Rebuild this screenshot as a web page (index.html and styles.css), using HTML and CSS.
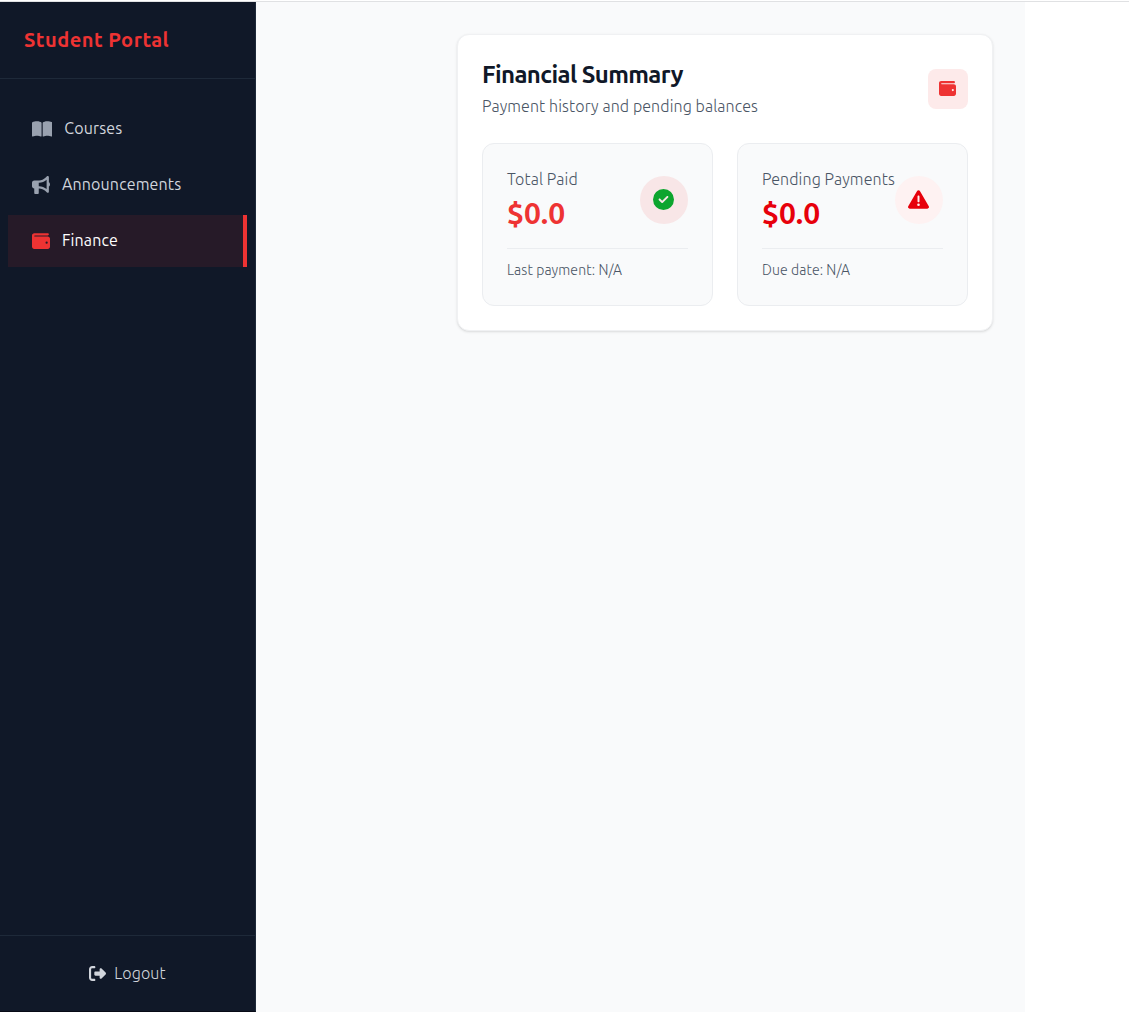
FILE: index.html
```html
<!DOCTYPE html>
<html lang="en">
<head>
<meta charset="utf-8">
<title>Student Portal</title>
<link rel="stylesheet" href="styles.css">
</head>
<body>
<div class="app">
  <aside class="sidebar">
    <div class="brand"><span class="brand-name">Student Portal</span></div>
    <nav class="nav">
      <a class="nav-item"><svg class="icon book" viewBox="0 0 576 512"><path d="M249.6 471.5c10.8 3.8 22.4-4.1 22.4-15.5V78.6c0-4.2-1.6-8.4-5-11C247.4 52 202.4 32 144 32C93.5 32 46.3 45.3 18.1 56.1C6.8 60.5 0 71.7 0 83.8V454.1c0 11.9 12.8 20.2 24.1 16.5C55.6 460.1 105.5 448 144 448c33.9 0 79 14 105.6 23.5zm76.8 0C353 462 398.1 448 432 448c38.5 0 88.4 12.1 119.9 22.6c11.3 3.8 24.1-4.6 24.1-16.5V83.8c0-12.1-6.8-23.3-18.1-27.6C529.7 45.3 482.5 32 432 32c-58.4 0-103.4 20-123 35.6c-3.3 2.6-5 6.8-5 11V456c0 11.4 11.7 19.3 22.4 15.5z"/></svg><span>Courses</span></a>
      <a class="nav-item"><svg class="icon" viewBox="0 0 512 512"><path d="M480 32c0-12.9-7.8-24.6-19.8-29.6s-25.7-2.2-34.9 6.9L381.7 53c-48 48-113.1 75-181 75H192 160 64c-35.3 0-64 28.7-64 64v96c0 35.3 28.7 64 64 64l0 128c0 17.7 14.3 32 32 32h64c17.7 0 32-14.3 32-32V352l8.7 0c67.9 0 133 27 181 75l43.6 43.6c9.2 9.2 22.9 11.9 34.9 6.9s19.8-16.6 19.8-29.6V300.4c18.6-8.8 32-32.5 32-60.4s-13.4-51.6-32-60.4V32zm-64 76.7V240 371.3C357.2 317.8 280.5 288 200.7 288H192V192h8.7c79.8 0 156.5-29.8 215.3-83.3z"/></svg><span>Announcements</span></a>
      <a class="nav-item active"><svg class="icon" viewBox="0 0 512 512"><path d="M64 32C28.7 32 0 60.7 0 96V416c0 35.3 28.7 64 64 64H448c35.3 0 64-28.7 64-64V192c0-35.3-28.7-64-64-64H80c-8.8 0-16-7.2-16-16s7.2-16 16-16H448c17.7 0 32-14.3 32-32s-14.3-32-32-32H64zM416 272a32 32 0 1 1 0 64 32 32 0 1 1 0-64z"/></svg><span>Finance</span></a>
    </nav>
    <div class="logout"><svg class="icon" viewBox="0 0 512 512"><path d="M377.9 105.9L500.7 228.7c7.2 7.2 11.3 17.1 11.3 27.3s-4.1 20.1-11.3 27.3L377.9 406.1c-6.4 6.4-15 9.9-24 9.9c-18.7 0-33.9-15.2-33.9-33.9l0-62.1-128 0c-17.7 0-32-14.3-32-32l0-64c0-17.7 14.3-32 32-32l128 0 0-62.1c0-18.7 15.2-33.9 33.9-33.9c9 0 17.6 3.6 24 9.9zM160 96L96 96c-17.7 0-32 14.3-32 32l0 256c0 17.7 14.3 32 32 32l64 0c17.7 0 32 14.3 32 32s-14.3 32-32 32l-64 0c-53 0-96-43-96-96L0 128C0 75 43 32 96 32l64 0c17.7 0 32 14.3 32 32s-14.3 32-32 32z"/></svg><span>Logout</span></div>
  </aside>
  <main class="content">
    <section class="card">
      <header class="card-head">
        <div class="heading">
          <h1 class="title">Financial Summary</h1>
          <p class="subtitle">Payment history and pending balances</p>
        </div>
        <div class="badge"><svg class="icon" viewBox="0 0 512 512"><path d="M64 32C28.7 32 0 60.7 0 96V416c0 35.3 28.7 64 64 64H448c35.3 0 64-28.7 64-64V192c0-35.3-28.7-64-64-64H80c-8.8 0-16-7.2-16-16s7.2-16 16-16H448c17.7 0 32-14.3 32-32s-14.3-32-32-32H64zM416 272a32 32 0 1 1 0 64 32 32 0 1 1 0-64z"/></svg></div>
      </header>
      <div class="stats">
        <article class="stat">
          <div class="stat-top">
            <div class="stat-text">
              <p class="label">Total Paid</p>
              <p class="amount">$0.0</p>
            </div>
            <div class="round paid"><svg class="icon" viewBox="0 0 512 512"><path d="M256 512A256 256 0 1 0 256 0a256 256 0 1 0 0 512zM369 209L241 337c-9.4 9.4-24.6 9.4-33.9 0l-64-64c-9.4-9.4-9.4-24.6 0-33.9s24.6-9.4 33.9 0l47 47L335 175c9.4-9.4 24.6-9.4 33.9 0s9.4 24.6 0 33.9z"/></svg></div>
          </div>
          <p class="note">Last payment: N/A</p>
        </article>
        <article class="stat">
          <div class="stat-top">
            <div class="stat-text">
              <p class="label">Pending Payments</p>
              <p class="amount due">$0.0</p>
            </div>
            <div class="round pending"><svg class="icon" viewBox="0 0 512 512"><path d="M256 32c14.2 0 27.3 7.5 34.5 19.8l216 368c7.3 12.4 7.3 27.7 .2 40.1S486.3 480 472 480H40c-14.3 0-27.6-7.7-34.7-20.1s-7-27.8 .2-40.1l216-368C228.7 39.5 241.8 32 256 32zm0 128c-13.3 0-24 10.7-24 24V296c0 13.3 10.7 24 24 24s24-10.7 24-24V184c0-13.3-10.7-24-24-24zm32 224a32 32 0 1 0 -64 0 32 32 0 1 0 64 0z"/></svg></div>
          </div>
          <p class="note">Due date: N/A</p>
        </article>
      </div>
    </section>
  </main>
</div>
</body>
</html>
```
FILE: styles.css
```css
* { box-sizing: border-box; }
body, h1, p { margin: 0; }
body {
  height: 1012px;
  overflow: hidden;
  padding-top: 1px;
  background: #fff;
  font-family: Ubuntu, "Noto Sans", sans-serif;
  font-size: 16px;
  font-weight: 300;
  line-height: 24px;
  letter-spacing: 0.1px;
  white-space: nowrap;
}
.icon { display: block; flex: none; width: 18px; height: 18px; fill: currentColor; }
.app { display: flex; height: 1011px; border-top: 1px solid #e0e1e3; }
.sidebar {
  display: flex;
  flex-direction: column;
  flex: none;
  width: 256px;
  background: #101828;
  border-right: 1px solid #1e2939;
  border-bottom: 1px solid #080b16;
}
.brand { height: 77px; padding: 24px; border-bottom: 1px solid #1e2939; }
.brand-name { display: block; color: #ee3333; font-size: 20px; font-weight: 600; line-height: 28px; letter-spacing: 0.5px; }
.nav { display: flex; flex: 1; flex-direction: column; gap: 4px; padding: 24px 8px; }
.nav-item { display: flex; align-items: center; gap: 12px; height: 52px; padding: 0 24px; color: #99a1af; font-weight: 400; letter-spacing: 0.14px; }
.nav-item span { color: #d1d5dc; margin-top: -2px; }
.nav-item .book { width: 20.25px; }
.nav-item.active { border-right: 4px solid #ee3333; background: rgba(238, 51, 51, 0.1); color: #ee3333; }
.nav-item.active span { color: #fff; }
.logout { display: flex; align-items: center; justify-content: center; gap: 8px; height: 76px; padding-bottom: 1px; border-top: 1px solid #1e2939; color: #d1d5dc; }
.logout .icon { width: 17px; height: 17px; margin-top: 1px; }
.logout span { padding-bottom: 1px; }
.content { width: 769px; padding: 32px; background: #f9fafb; }
.card {
  width: 536px;
  height: 297px;
  margin-left: auto;
  padding: 24px;
  border: 1px solid #f0f1f3;
  border-radius: 12px;
  background: #fff;
  box-shadow: 0 1px 3px rgba(0, 0, 0, 0.1), 0 1px 2px -1px rgba(0, 0, 0, 0.1);
}
.card-head { display: flex; align-items: center; justify-content: space-between; height: 60px; margin-bottom: 24px; }
.heading { padding-bottom: 1px; }
.title { color: #101828; font-size: 24px; font-weight: 600; line-height: 32px; letter-spacing: -0.6px; }
.subtitle { margin-top: 3px; color: #4a5565; }
.badge { display: grid; place-items: center; width: 40px; height: 40px; padding: 0 1px 1px 0; border-radius: 8px; background: #fdeaea; color: #ee3333; }
.badge .icon { width: 17px; height: 17px; }
.stats { display: grid; grid-template-columns: 1fr 1fr; gap: 24px; }
.stat { height: 163px; padding: 24px; border: 1px solid #ebedf0; border-radius: 12px; background: #f9fafb; }
.stat-top { display: flex; align-items: center; justify-content: space-between; height: 64px; margin-bottom: 16px; }
.stat-text { flex: 1; min-width: 0; padding-bottom: 2px; }
.label { color: #4a5565; }
.amount { margin-top: 4px; color: #ee3333; font-size: 30px; font-weight: 600; line-height: 36px; letter-spacing: 0; }
.amount.due { color: #e7000b; }
.round { display: grid; flex: none; place-items: center; width: 48px; height: 48px; padding: 0 1px 1px 0; border-radius: 50%; }
.round .icon { width: 21px; height: 21px; }
.paid { background: #f8e6e7; color: #0ca52e; }
.pending { background: #fef2f2; color: #e7000b; }
.note { padding-top: 11px; border-top: 1px solid #ebedf0; color: #4a5565; font-size: 14px; line-height: 20px; }
```
